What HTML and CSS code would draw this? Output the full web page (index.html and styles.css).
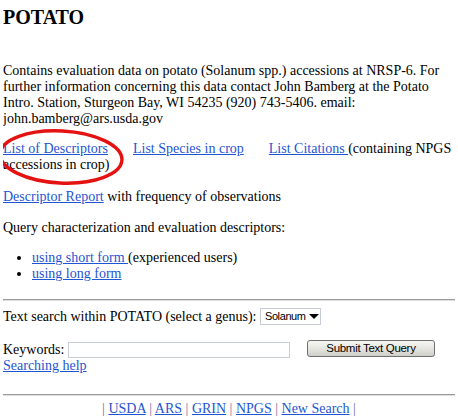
FILE: index.html
```html
<!DOCTYPE html>
<html>
<head>
<meta charset="utf-8">
<title>POTATO</title>
<link rel="stylesheet" href="styles.css">
</head>
<body>
<h2 class="title">POTATO</h2>
<p class="intro">Contains evaluation data on potato (Solanum spp.) accessions at NRSP-6. For further information concerning this data contact John Bamberg at the Potato Intro. Station, Sturgeon Bay, WI 54235 (920) 743-5406. email: john.bamberg@ars.usda.gov</p>
<p class="links"><svg class="circle" width="130" height="60" viewBox="0 0 130 60"><ellipse cx="62" cy="28" rx="61" ry="26" transform="rotate(3 62 28)" fill="none" stroke="#e51212" stroke-width="3.4"/></svg><a href="#">List of Descriptors</a><a class="gap" href="#">List Species in crop</a><a class="gap" href="#">List Citations </a>(containing NPGS accessions in crop)</p>
<p class="report"><a href="#">Descriptor Report</a> with frequency of observations</p>
<p class="query">Query characterization and evaluation descriptors:</p>
<ul class="forms">
<li><a href="#">using short form </a>(experienced users)</li>
<li><a href="#">using long form</a></li>
</ul>
<hr class="rule">
<form class="search">
<p class="genus">Text search within POTATO (select a genus): <span class="select-wrap"><select class="select"><option>Solanum</option></select></span></p>
<p class="keywords">Keywords: <input class="kw" type="text"><button class="submit" type="button">Submit Text Query</button><br><a href="#">Searching help</a></p>
</form>
<hr class="rule rule2">
<p class="footer"><span class="pipe">|</span> <a href="#">USDA</a> <span class="pipe">|</span> <a href="#">ARS</a> <span class="pipe">|</span> <a href="#">GRIN</a> <span class="pipe">|</span> <a href="#">NPGS</a> <span class="pipe">|</span> <a href="#">New Search</a> <span class="pipe">|</span></p>
</body>
</html>
```
FILE: styles.css
```css
html, body {
  background: #ffffff;
}
body {
  margin: 6px 3px 0 3px;
  font-family: "Liberation Serif", "Times New Roman", serif;
  font-size: 14px;
  line-height: 16px;
  color: #000;
}
a {
  color: #1f55d2;
  text-decoration: underline;
}
.title {
  margin: 0 0 35px 0;
  font-size: 20px;
  line-height: 22px;
  font-weight: bold;
}
p {
  margin: 0;
}
.intro {
  margin-bottom: 14px;
}
.links {
  position: relative;
  margin-bottom: 16px;
}
.circle {
  position: absolute;
  left: -4px;
  top: -12px;
  pointer-events: none;
}
.gap {
  margin-left: 25px;
}
.report {
  margin-bottom: 15px;
}
.query {
  margin-bottom: 14px;
}
.forms {
  margin: 0;
  padding-left: 29px;
}
.rule {
  margin: 17px -1px 0 -1px;
  border: 0;
  border-top: 1px solid #9c9c9c;
  border-bottom: 1px solid #dedede;
  height: 0;
}
.search {
  margin: 0;
}
.genus {
  margin-top: 8px;
  margin-bottom: 17px;
}
.select-wrap {
  position: relative;
  display: inline-block;
  vertical-align: top;
  margin-top: -1px;
  height: 17px;
  margin-bottom: -1px;
}
.select {
  -webkit-appearance: none;
  appearance: none;
  display: block;
  box-sizing: border-box;
  width: 61px;
  height: 17px;
  margin: 0;
  padding: 0 0 0 4px;
  border: 1px solid #c6cbd6;
  border-radius: 0;
  background: #fff;
  font-family: "Liberation Sans", Tahoma, sans-serif;
  font-size: 11px;
  letter-spacing: -0.4px;
  line-height: 15px;
  color: #000;
}
.select-wrap::after {
  content: "";
  position: absolute;
  right: 2px;
  top: 6px;
  border-left: 5px solid transparent;
  border-right: 5px solid transparent;
  border-top: 5px solid #000;
  pointer-events: none;
}
.kw {
  display: inline-block;
  box-sizing: border-box;
  width: 222px;
  height: 16px;
  margin: 0 0 0 0;
  padding: 0;
  border: 1px solid #c9cdd6;
  vertical-align: top;
}
.submit {
  display: inline-block;
  box-sizing: border-box;
  width: 128px;
  height: 17px;
  margin: -2px 0 0 17px;
  padding: 0;
  border: 1px solid #707070;
  border-radius: 3px;
  background: linear-gradient(#f6f6f4, #e2e2dc 60%, #cfcfca);
  font-family: "Liberation Sans", Tahoma, sans-serif;
  font-size: 11.5px;
  letter-spacing: -0.3px;
  line-height: 15px;
  color: #000;
  vertical-align: top;
}
.rule2 {
  margin-top: 20px;
}
.footer {
  margin-top: 5px;
  text-align: center;
}
.pipe {
  color: #6f6fa0;
}
```
